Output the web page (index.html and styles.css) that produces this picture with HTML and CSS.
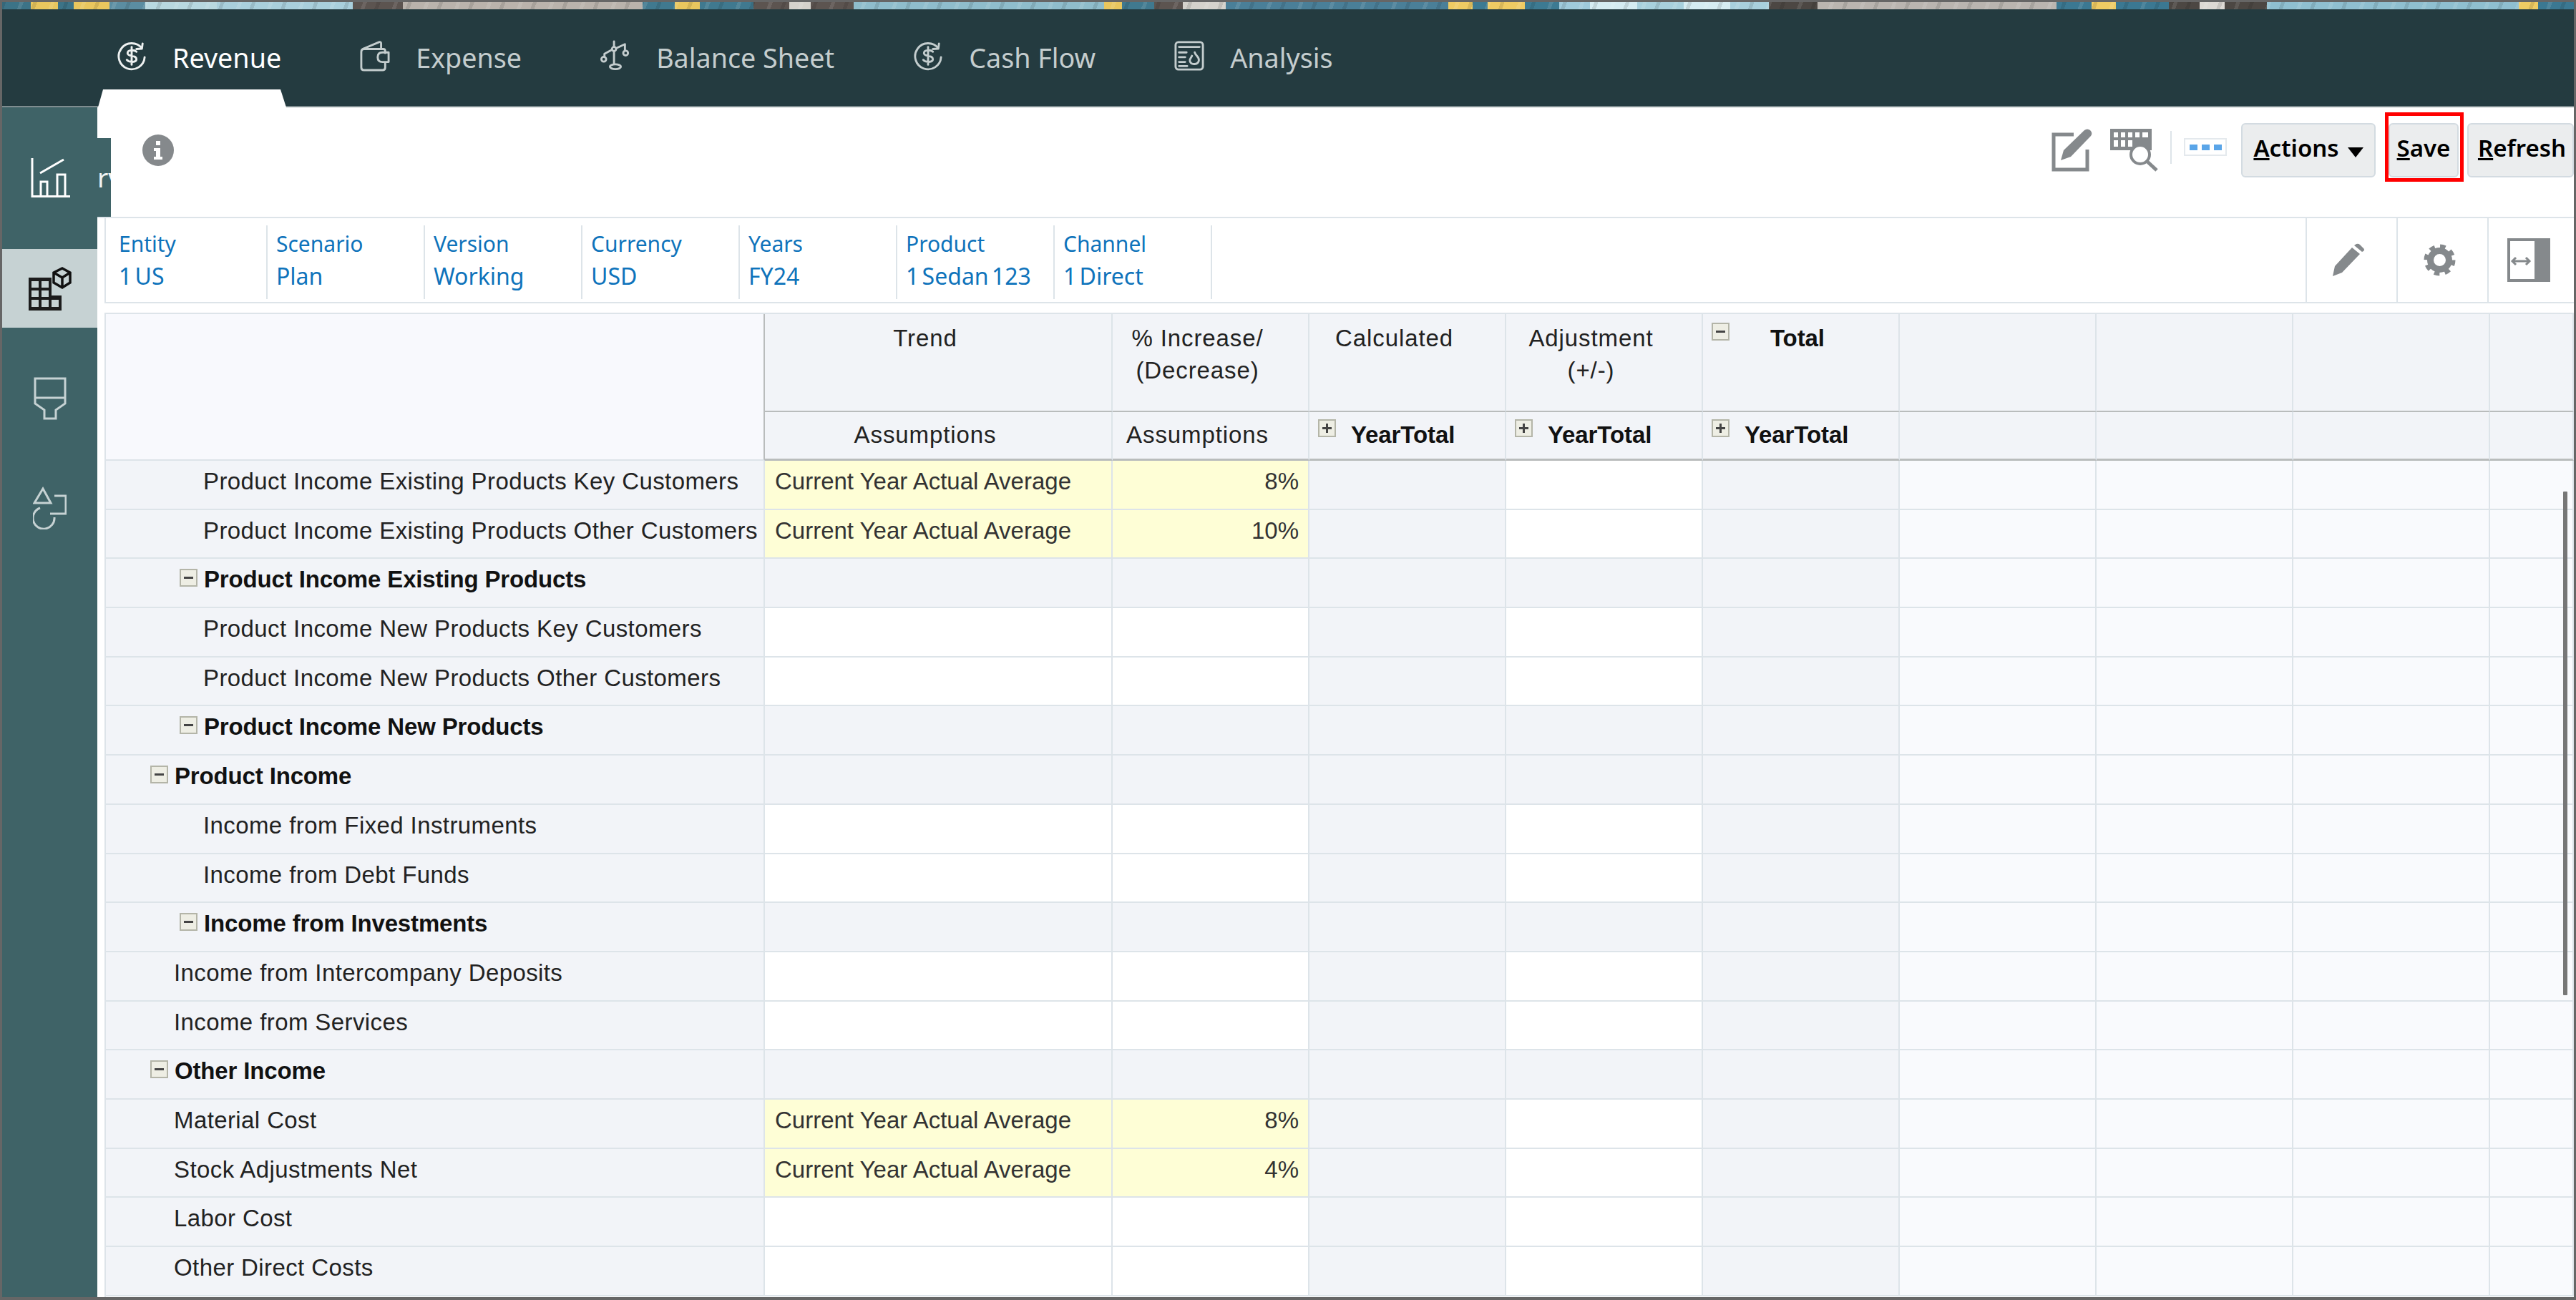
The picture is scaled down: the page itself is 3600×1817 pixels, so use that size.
FILE: index.html
```html
<!DOCTYPE html>
<html lang="en">
<head>
<meta charset="utf-8">
<title>Revenue</title>
<link rel="stylesheet" href="styles.css">
</head>
<body>
<div class="frame">
  <div class="strip"></div>
  <nav class="topnav">
    <a class="tab active">
      <svg class="nav-icon" viewBox="0 0 44 44"><path d="M37 11A19 19 0 1 0 41 24M29 12L37 11.500L38 4M29 16C26 13 16 13 16 18C16 24 29 20 29 27C29 32 18 32 15 28M22 9V35"/></svg>
      <span>Revenue</span>
    </a>
    <a class="tab">
      <svg class="nav-icon" viewBox="0 0 44 46"><path d="M37 19V16Q37 13 34 13H6Q2 13 2 17V40Q2 44 6 44H33Q37 44 37 40V32M4 13L28 3Q31 2 31 5V13M42 18H33Q26 18 26 25Q26 32 33 32H42Z"/></svg>
      <span>Expense</span>
    </a>
    <a class="tab">
      <svg class="nav-icon" viewBox="0 0 44 44"><path d="M20 1V9M17 13L6 19V24M23 11L36 5V14M20 15V33"/><circle cx="20" cy="12" r="3"/><circle cx="5" cy="27" r="3.500"/><circle cx="37" cy="18" r="3.500"/><ellipse cx="22" cy="38" rx="8" ry="3.500"/></svg>
      <span>Balance Sheet</span>
    </a>
    <a class="tab">
      <svg class="nav-icon" viewBox="0 0 44 44"><path d="M37 11A19 19 0 1 0 41 24M29 12L37 11.500L38 4M29 16C26 13 16 13 16 18C16 24 29 20 29 27C29 32 18 32 15 28M22 9V35"/></svg>
      <span>Cash Flow</span>
    </a>
    <a class="tab">
      <svg class="nav-icon" viewBox="0 0 44 44"><rect x="2" y="2" width="40" height="40" rx="4"/><path d="M7 9H37M7 17H18M7 24H16M7 31H16M7 37H19M30 17C31 22 37 23 36 29C35 35 25 36 23 30C22 26 25 25 26 22"/></svg>
      <span>Analysis</span>
    </a>
  </nav>
  <div class="main">
    <aside class="sidebar">
      <div class="side-item">
        <svg class="side-chart" viewBox="0 0 55 55"><path d="M2 0V53.500H55M13 21L46 2M14 53V33H23V53M37 53V23H48V53"/></svg>
      </div>
      <div class="side-item selected">
        <svg class="side-grid" viewBox="0 0 60 61">
          <path class="ink" d="M0 15H32V40H46V61H0Z"/>
          <path class="cells" d="M4 20H14V29H4ZM18 20H28V29H18ZM4 33H14V42H4ZM18 33H28V42H18ZM4 46H14V56H4ZM18 46H28V56H18ZM32 46H42V56H32Z"/>
          <path class="cube" d="M47 2L58 8V22L47 29L35 22V8ZM35 8L47 15L58 8M47 15V29"/>
        </svg>
      </div>
      <div class="side-item">
        <svg class="side-funnel" viewBox="0 0 46 60"><path d="M2 2H44V37L31 46V58H15V46L2 37ZM2 29H44"/></svg>
      </div>
      <div class="side-item">
        <svg class="side-shapes" viewBox="0 0 47 60"><path d="M14 3L25 23H2ZM30 13H46V38H24M10 30A15 15 0 1 0 30 43"/></svg>
      </div>
    </aside>
    <div class="hidden-title"><span>rv</span></div>
    <div class="content">
      <header class="toolbar">
        <svg class="info" viewBox="0 0 44 44"><circle cx="22" cy="22" r="22"/><path class="info-i" d="M19 9H25V15H19ZM16 19H25V31H28V35H16V31H19V23H16Z"/></svg>
        <svg class="tool-edit" viewBox="0 0 58 60"><path class="edit-box" d="M31 8H3V57H50V29"/><path class="edit-pen" d="M13 44L17 30L46 2Q50 -1 54 2Q58 6 55 10L27 39Z"/></svg>
        <svg class="tool-query" viewBox="0 0 67 60">
          <path class="key" d="M0 0H58V30H0Z"/>
          <path class="key-gap" d="M5 5H11V12H5ZM15 5H21V12H15ZM25 5H31V12H25ZM35 5H41V12H35ZM45 5H53V12H45ZM5 16H11V25H5ZM15 16H21V25H15ZM25 16H31V25H25Z"/>
          <circle class="lens" cx="42" cy="36" r="13"/>
          <path class="handle" d="M51 45L65 58"/>
        </svg>
        <span class="tool-rule"></span>
        <span class="tool-dots"><i></i><i></i><i></i></span>
        <button class="btn btn-actions"><span><u>A</u>ctions</span><span class="caret"></span></button>
        <button class="btn btn-save"><span><u>S</u>ave</span></button>
        <button class="btn btn-refresh"><span><u>R</u>efresh</span></button>
      </header>
      <section class="pov">
        <div class="pov-item first"><span>Entity</span><span class="pov-val">1 US</span></div>
        <div class="pov-item"><span>Scenario</span><span class="pov-val">Plan</span></div>
        <div class="pov-item"><span>Version</span><span class="pov-val">Working</span></div>
        <div class="pov-item"><span>Currency</span><span class="pov-val">USD</span></div>
        <div class="pov-item"><span>Years</span><span class="pov-val">FY24</span></div>
        <div class="pov-item"><span>Product</span><span class="pov-val">1 Sedan 123</span></div>
        <div class="pov-item"><span>Channel</span><span class="pov-val">1 Direct</span></div>
        <div class="pov-tools">
          <div class="pov-tool"><svg class="pov-pencil" viewBox="0 0 45 45"><path d="M0 45L3 31L27 5L38 14L13 40ZM30 2L33 0Q36 -1 38 1L43 6Q45 8 43 10L41 11Z"/></svg></div>
          <div class="pov-tool"><svg class="pov-gear" viewBox="0 0 45 45"><circle class="gear-ring" cx="22.500" cy="22.500" r="13"/><circle class="gear-teeth" cx="22.500" cy="22.500" r="19"/></svg></div>
          <div class="pov-tool last"><svg class="pov-panel" viewBox="0 0 60 61"><path class="panel-frame" d="M2 2H58V59H2Z"/><path class="panel-fill" d="M38 0H60V61H38Z"/><path class="panel-arrow" d="M7 32H31M12 27L7 32L12 37M26 27L31 32L26 37"/></svg></div>
        </div>
      </section>
      <section class="sheet">
        <div class="head">
          <div class="corner"></div>
          <div class="hc">Trend</div>
          <div class="hc">% Increase/<br>(Decrease)</div>
          <div class="hc">Calculated</div>
          <div class="hc">Adjustment<br>(+/-)</div>
          <div class="hc total"><i class="box minus"></i><b>Total</b></div>
          <div class="hc"></div><div class="hc"></div><div class="hc"></div><div class="hc"></div>
          <div class="hd">Assumptions</div>
          <div class="hd">Assumptions</div>
          <div class="hd yt"><i class="box plus"></i><b>YearTotal</b></div>
          <div class="hd yt"><i class="box plus"></i><b>YearTotal</b></div>
          <div class="hd yt"><i class="box plus"></i><b>YearTotal</b></div>
          <div class="hd"></div><div class="hd"></div><div class="hd"></div><div class="hd"></div>
        </div>
        <div class="row"><div class="lab l2">Product Income Existing Products Key Customers</div><div class="y">Current Year Actual Average</div><div class="y num">8%</div><div></div><div></div><div></div><div></div><div></div><div></div><div></div></div>
        <div class="row"><div class="lab l2">Product Income Existing Products Other Customers</div><div class="y">Current Year Actual Average</div><div class="y num">10%</div><div></div><div></div><div></div><div></div><div></div><div></div><div></div></div>
        <div class="row sum"><div class="lab g2"><i class="box minus"></i><b>Product Income Existing Products</b></div><div></div><div></div><div></div><div></div><div></div><div></div><div></div><div></div><div></div></div>
        <div class="row"><div class="lab l2">Product Income New Products Key Customers</div><div></div><div></div><div></div><div></div><div></div><div></div><div></div><div></div><div></div></div>
        <div class="row"><div class="lab l2">Product Income New Products Other Customers</div><div></div><div></div><div></div><div></div><div></div><div></div><div></div><div></div><div></div></div>
        <div class="row sum"><div class="lab g2"><i class="box minus"></i><b>Product Income New Products</b></div><div></div><div></div><div></div><div></div><div></div><div></div><div></div><div></div><div></div></div>
        <div class="row sum"><div class="lab g1"><i class="box minus"></i><b>Product Income</b></div><div></div><div></div><div></div><div></div><div></div><div></div><div></div><div></div><div></div></div>
        <div class="row"><div class="lab l2">Income from Fixed Instruments</div><div></div><div></div><div></div><div></div><div></div><div></div><div></div><div></div><div></div></div>
        <div class="row"><div class="lab l2">Income from Debt Funds</div><div></div><div></div><div></div><div></div><div></div><div></div><div></div><div></div><div></div></div>
        <div class="row sum"><div class="lab g2"><i class="box minus"></i><b>Income from Investments</b></div><div></div><div></div><div></div><div></div><div></div><div></div><div></div><div></div><div></div></div>
        <div class="row"><div class="lab l1">Income from Intercompany Deposits</div><div></div><div></div><div></div><div></div><div></div><div></div><div></div><div></div><div></div></div>
        <div class="row"><div class="lab l1">Income from Services</div><div></div><div></div><div></div><div></div><div></div><div></div><div></div><div></div><div></div></div>
        <div class="row sum"><div class="lab g1"><i class="box minus"></i><b>Other Income</b></div><div></div><div></div><div></div><div></div><div></div><div></div><div></div><div></div><div></div></div>
        <div class="row"><div class="lab l1">Material Cost</div><div class="y">Current Year Actual Average</div><div class="y num">8%</div><div></div><div></div><div></div><div></div><div></div><div></div><div></div></div>
        <div class="row"><div class="lab l1">Stock Adjustments Net</div><div class="y">Current Year Actual Average</div><div class="y num">4%</div><div></div><div></div><div></div><div></div><div></div><div></div><div></div></div>
        <div class="row"><div class="lab l1">Labor Cost</div><div></div><div></div><div></div><div></div><div></div><div></div><div></div><div></div><div></div></div>
        <div class="row"><div class="lab l1">Other Direct Costs</div><div></div><div></div><div></div><div></div><div></div><div></div><div></div><div></div><div></div></div>
        <div class="scrollbar"></div>
      </section>
    </div>
  </div>
</div>
</body>
</html>
```
FILE: styles.css
```css
* { box-sizing: border-box; }
html, body { margin: 0; padding: 0; background: #fff; }
body { font-family: "Noto Sans", "Open Sans", sans-serif; }
.frame {
  width: 3600px; height: 1817px;
  border: 3px solid #666;
  border-bottom-width: 4px;
  display: flex; flex-direction: column;
  overflow: hidden;
  background: #fff;
}
.strip {
  height: 10px; flex: none;
  background:
    repeating-linear-gradient(110deg, rgba(0,0,0,.10) 0 5px, transparent 5px 23px, rgba(255,255,255,.10) 23px 28px, transparent 28px 41px),
    linear-gradient(90deg,
    #3c7387 0 40px, #e9c65e 40px 78px, #3c7387 78px 100px, #e9c65e 100px 150px,
    #5b8da2 150px 200px, #b8d8e0 200px 300px, #a9cfdc 300px 490px, #5c5450 490px 560px,
    #bab3ac 560px 895px, #40798f 895px 940px, #e9c65e 940px 975px, #40798f 975px 1050px,
    #5c5450 1050px 1100px, #d5d2cc 1100px 1130px, #5c5450 1130px 1190px, #8fbdcc 1190px 1540px,
    #e9c65e 1540px 1565px, #40798f 1565px 1610px, #5c5450 1610px 1650px, #d5d2cc 1650px 1710px,
    #4a7f98 1710px 2021px, #efcb63 2021px 2055px, #3d7a92 2055px 2076px, #efcb63 2076px 2128px,
    #3d7a92 2128px 2176px, #9fcadb 2176px 2219px, #d6ecf2 2219px 2285px, #a8d0dd 2285px 2350px,
    #d6ecf2 2350px 2415px, #a8d0dd 2415px 2469px, #4c4743 2469px 2537px, #bab5b0 2537px 2871px,
    #3b7892 2871px 2920px, #efcb63 2920px 2954px, #3b7892 2954px 3028px, #4c4743 3028px 3071px,
    #ddd9d4 3071px 3106px, #4c4743 3106px 3165px, #8fbfd0 3165px 3517px, #efcb63 3517px 3544px,
    #3b7892 3544px);
}
.topnav {
  height: 137px; flex: none;
  background: #243b40;
  border-bottom: 2px solid #7f8d90;
  display: flex; align-items: center; gap: 110px;
  padding-left: 160px;
  position: relative;
}
.topnav::after {
  content: "";
  position: absolute; left: 134px; bottom: -2px;
  width: 263px; height: 25px;
  background: #fff;
  clip-path: polygon(7px 0, 255px 0, 263px 100%, 0 100%);
}
.tab { display: flex; align-items: center; gap: 36px; color: #c4cdce; font-size: 37.700px; line-height: 48px; }
.tab.active { color: #fff; }
.nav-icon {
  width: 42px; height: 44px; margin-bottom: 6px;
  fill: none; stroke: #c4cdce; stroke-width: 3; stroke-linecap: round; stroke-linejoin: round;
}
.active .nav-icon { stroke: #eef1f1; }

.main { flex: 1; display: flex; min-height: 0; position: relative; }
.sidebar {
  width: 133px; flex: none;
  background: #3f6367;
  display: flex; flex-direction: column; gap: 44px;
  padding-top: 44px;
}
.side-item { height: 110px; display: flex; align-items: center; justify-content: center; flex: none; }
.side-item.selected { background: #c6d2d3; }
.side-item svg { fill: none; stroke-linejoin: miter; }
.side-chart { width: 55px; height: 55px; stroke: #fff; stroke-width: 3; margin: -2px 0 0 1px; }
.side-grid { width: 60px; height: 61px; }
.side-grid .ink { fill: #1c1c1c; }
.side-grid .cells { fill: #c6d2d3; }
.side-grid .cube { stroke: #111; stroke-width: 3.500; }
.side-funnel { width: 46px; height: 60px; stroke: #c6d2d3; stroke-width: 3; }
.side-shapes { width: 47px; height: 60px; stroke: #c6d2d3; stroke-width: 3; margin-top: -2px; }
.hidden-title {
  position: absolute; left: 133px; top: 43px;
  width: 19px; height: 110px;
  background: #3f6367;
  color: #f0f3f3;
  font-size: 37px; line-height: 110px;
  overflow: hidden;
}

.content { flex: 1; min-width: 0; display: flex; flex-direction: column; background: #fff; }
.toolbar {
  height: 155px; flex: none;
  border-bottom: 2px solid #dde4e9;
  display: flex; align-items: flex-start;
  padding-top: 22px;
}
.info { width: 44px; height: 44px; margin: 16px auto 0 63px; fill: #85898c; flex: none; }
.info .info-i { fill: #fff; }
.tool-edit { width: 58px; height: 60px; margin-top: 8px; flex: none; overflow: visible; }
.edit-box { fill: none; stroke: #85898c; stroke-width: 5; }
.edit-pen { fill: #85898c; }
.tool-query { width: 67px; height: 60px; margin: 8px 0 0 24px; flex: none; }
.key { fill: #85898c; }
.key-gap { fill: #fff; }
.lens { fill: #fff; stroke: #85898c; stroke-width: 4; }
.handle { fill: none; stroke: #85898c; stroke-width: 5; }
.tool-rule { width: 2px; height: 46px; background: #dde4e9; margin: 11px 17px 0; flex: none; }
.tool-dots {
  width: 60px; height: 25px; margin: 21px 20px 0 0;
  background: #fff; border: 2px solid #e4e9ed;
  display: flex; align-items: center; justify-content: center; gap: 6px; flex: none;
}
.tool-dots i { width: 11px; height: 8px; background: #5aa5e8; }
.btn {
  height: 76px; flex: none;
  font: 600 33px/1 "Noto Sans", sans-serif;
  color: #000;
  background: #ebedee;
  border: 2px solid #d3dbe1;
  border-radius: 6px;
  padding: 0;
  display: flex; align-items: center; justify-content: center;
  position: relative;
}
.btn span { margin-top: -8px; }
.btn-actions { width: 188px; gap: 12px; }
.btn-save { width: 98px; margin-left: 18px; }
.btn-save::after {
  content: "";
  position: absolute; left: -7px; top: -17px; right: -9px; bottom: -8px;
  border: 5px solid #f00;
}
.btn-refresh { width: 149px; margin-left: 12px; padding-left: 4px; }
.caret { width: 0; height: 0; border-left: 11px solid transparent; border-right: 11px solid transparent; border-top: 14px solid #000; margin-top: 6px !important; }

.pov {
  height: 119px; flex: none;
  margin-left: 10px;
  border-left: 2px solid #dde4e9;
  border-bottom: 2px solid #dde4e9;
  display: flex; align-items: stretch;
}
.pov-item {
  width: 220px; flex: none;
  padding: 13px 0 6px 12px;
  color: #0e73bb;
  font-size: 30px; line-height: 45px;
  display: flex; flex-direction: column;
  position: relative;
}
.pov-val { font-size: 32px; word-spacing: -4px; }
.pov-item.first { width: 226px; padding-left: 18px; }
.pov-item::after {
  content: ""; position: absolute; right: 0; top: 10px; bottom: 4px;
  width: 2px; background: #dde4e9;
}
.pov-tools { margin-left: auto; display: flex; }
.pov-tool { width: 127px; border-left: 2px solid #dde4e9; display: flex; align-items: center; justify-content: center; padding-right: 8px; }
.pov-tool.last { width: 121px; }
.pov-pencil { width: 45px; height: 45px; fill: #85898c; overflow: visible; }
.pov-gear { width: 45px; height: 45px; fill: none; }
.gear-ring { stroke: #85898c; stroke-width: 9; }
.gear-teeth { stroke: #85898c; stroke-width: 6; stroke-dasharray: 7.500 7.420; }
.pov-panel { width: 60px; height: 61px; fill: none; }
.panel-frame { stroke: #85898c; stroke-width: 4; }
.panel-fill { fill: #85898c; }
.panel-arrow { stroke: #85898c; stroke-width: 3; }

.sheet {
  --cols: 921px 486px repeat(7, 275px) 1fr;
  flex: 1; min-height: 0;
  margin: 13px 0 0 10px;
  border-left: 2px solid #dde4e9;
  border-top: 2px solid #dde4e9;
  overflow: hidden;
  position: relative;
  font: 33px/40px "Liberation Sans", Arial, sans-serif;
  color: #222;
}
.head {
  display: grid;
  grid-template-columns: var(--cols);
  grid-template-rows: 137px 68px;
}
.corner { grid-row: 1 / 3; background: #f8f9fd; border-right: 2px solid #b9bcbc; border-bottom: 2px solid #dde4e9; }
.hc, .hd {
  background: #f2f4f8;
  border-right: 2px solid #dde4e9;
  text-align: center;
  padding-right: 36px;
  letter-spacing: .9px;
}
.hc { border-bottom: 2px solid #b9bcbc; padding-top: 11px; line-height: 45px; }
.hd { border-bottom: 3px solid #b9bcbc; padding-top: 12px; }
.hc b, .hd b { color: #111; letter-spacing: -.1px; }
.total { display: flex; padding: 12px 0 0 8px; text-align: left; line-height: 40px; }
.total .box { margin-left: 4px; }
.total b { margin: 2px 0 0 57px; }
.yt { display: flex; gap: 21px; padding: 10px 0 0 12px; text-align: left; }
.yt b { margin-top: 2px; }
.box {
  width: 25px; height: 25px; flex: none; display: block; position: relative;
  background: #eeeee4; border: 2px solid #b4b5a8;
}
.minus::before, .plus::before, .plus::after {
  content: ""; position: absolute; background: #444;
}
.minus::before, .plus::before { left: 4px; right: 4px; top: 9px; height: 3px; }
.plus::after { top: 4px; bottom: 4px; left: 9px; width: 3px; }

.row {
  display: grid;
  grid-template-columns: var(--cols);
  height: 68.700px;
}
.row > div {
  background: #fff;
  border-right: 2px solid #dde4e9;
  border-bottom: 2px solid #dde4e9;
  padding-top: 9px;
  white-space: nowrap;
}
.row > div:nth-child(4), .row > div:nth-child(6), .row.sum > div { background: #f2f4f8; }
.row > div:nth-child(n+7), .row.sum > div:nth-child(n+7) { background: #f9fafd; }
.row > div.lab { background: #f2f4f8; letter-spacing: .4px; }
.row > div.y { background: #fefed6; padding-left: 14px; color: #333; }
.row > div.num { text-align: right; padding: 9px 13px 0 0; }
.lab.l2 { padding-left: 136px; }
.lab.l1 { padding-left: 95px; }
.lab.g2, .lab.g1 { display: flex; align-items: flex-start; gap: 9px; }
.lab.g2 { padding-left: 103px; }
.lab.g1 { padding-left: 62px; }
.lab .box { margin-top: 5px; }
.lab b { color: #111; letter-spacing: -.15px; }
.scrollbar {
  position: absolute; right: 9px; top: 248px;
  width: 6px; height: 704px;
  background: #777;
  border-radius: 1px;
}
```
